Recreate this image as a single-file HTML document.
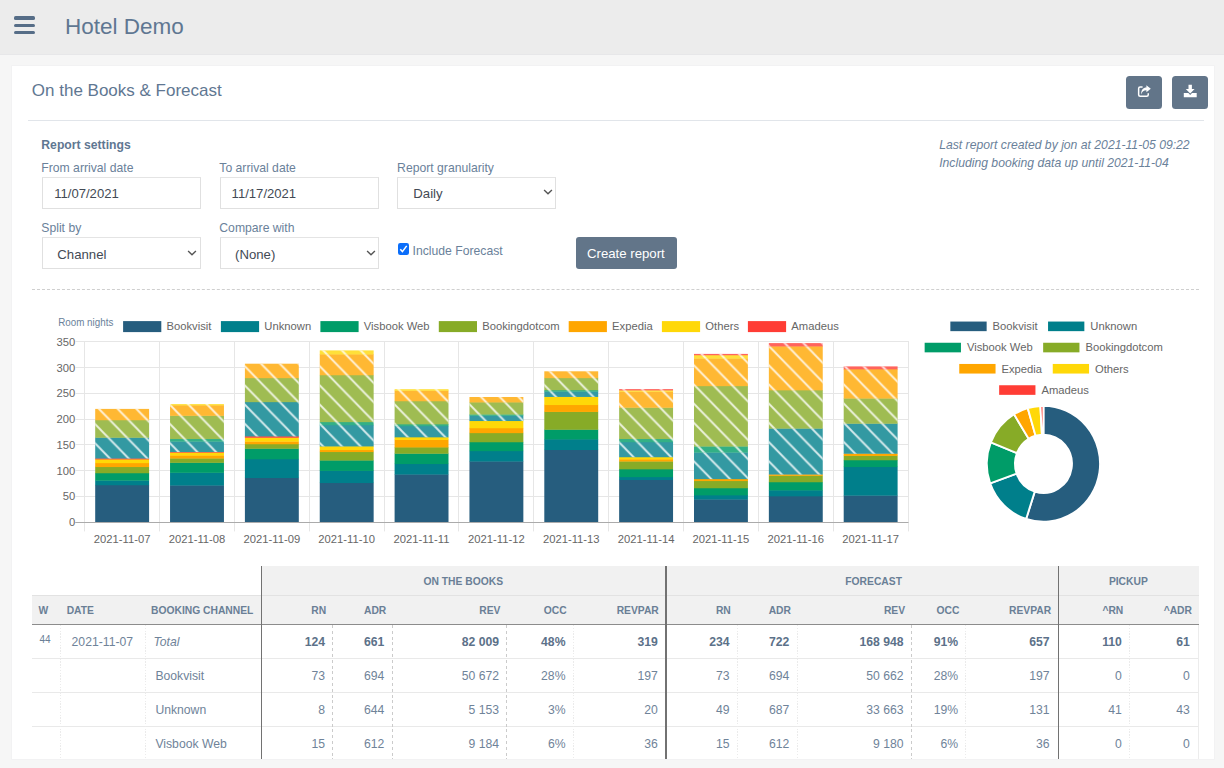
<!DOCTYPE html>
<html><head><meta charset="utf-8"><title>Hotel Demo</title>
<style>
html,body{margin:0;padding:0;}
body{width:1224px;height:768px;overflow:hidden;background:#f6f6f6;font-family:"Liberation Sans", sans-serif;position:relative;}
.t{position:absolute;white-space:nowrap;line-height:1;}
</style></head><body>
<div style="position:absolute;left:0.00px;top:0.00px;width:1224.00px;height:55.00px;background:#ececec"></div><div style="position:absolute;left:0.00px;top:54.00px;width:1224.00px;height:1.00px;background:#e7e7e9"></div><div style="position:absolute;left:14.00px;top:16.40px;width:21.00px;height:3.50px;background:#566d87;border-radius:1.6px"></div><div style="position:absolute;left:14.00px;top:23.50px;width:21.00px;height:3.50px;background:#566d87;border-radius:1.6px"></div><div style="position:absolute;left:14.00px;top:30.90px;width:21.00px;height:3.50px;background:#566d87;border-radius:1.6px"></div><div class="t" style="left:65.00px;top:16.15px;font-size:22.5px;color:#5f7792;font-weight:normal;font-style:normal;">Hotel Demo</div><div style="position:absolute;left:11.80px;top:65.80px;width:1202.60px;height:693.00px;background:#fff;box-shadow:0 0 0 0.6px #efeff1"></div><div class="t" style="left:31.80px;top:81.81px;font-size:17px;color:#5f7792;font-weight:normal;font-style:normal;">On the Books &amp; Forecast</div><div style="position:absolute;left:1126.00px;top:76.00px;width:36.00px;height:32.50px;background:#627589;border-radius:3.5px"></div><div style="position:absolute;left:1172.00px;top:76.00px;width:36.00px;height:32.50px;background:#627589;border-radius:3.5px"></div><svg style="position:absolute;left:1126px;top:76px" width="36" height="33" viewBox="0 0 36 33">
<path d="M16.6 11.05 H14.2 a1.55 1.55 0 0 0 -1.55 1.55 V18.7 a1.55 1.55 0 0 0 1.55 1.55 H20.7 a1.55 1.55 0 0 0 1.55 -1.55 V17.2" fill="none" stroke="#fff" stroke-width="1.5"/>
<path d="M15.1 18.6 C15.1 14.2 17.2 11.6 20.4 11.6 V9.2 L24.8 12.8 L20.4 16.3 V14.3 C17.6 14.3 16.3 15.4 15.1 18.6 Z" fill="#fff"/>
</svg><svg style="position:absolute;left:1172px;top:76px" width="36" height="33" viewBox="0 0 36 33">
<path d="M16.5 8.7 H19.9 V13 H22.6 L18.2 17.4 L13.8 13 H16.5 Z" fill="#fff"/>
<path d="M11.8 17.1 H16.4 L18.2 18.9 L20 17.1 H24.7 V21.2 H11.8 Z" fill="#fff"/>
</svg><div style="position:absolute;left:28.00px;top:120.00px;width:1175.60px;height:1.20px;background:#e1e5ea"></div><div class="t" style="left:41.30px;top:139.17px;font-size:12.2px;color:#5f7792;font-weight:bold;font-style:normal;">Report settings</div><div class="t" style="left:41.30px;top:161.87px;font-size:12.2px;color:#6a819a;font-weight:normal;font-style:normal;">From arrival date</div><div class="t" style="left:219.30px;top:161.87px;font-size:12.2px;color:#6a819a;font-weight:normal;font-style:normal;">To arrival date</div><div class="t" style="left:397.10px;top:161.87px;font-size:12.2px;color:#6a819a;font-weight:normal;font-style:normal;">Report granularity</div><div class="t" style="left:41.30px;top:222.27px;font-size:12.2px;color:#6a819a;font-weight:normal;font-style:normal;">Split by</div><div class="t" style="left:219.30px;top:222.27px;font-size:12.2px;color:#6a819a;font-weight:normal;font-style:normal;">Compare with</div><div style="position:absolute;left:42.00px;top:177.00px;width:159.00px;height:32.00px;background:#fff;border:1px solid #e0e0e0;border-top-color:#e4e4e4;box-sizing:border-box"></div><div style="position:absolute;left:219.50px;top:177.00px;width:159.30px;height:32.00px;background:#fff;border:1px solid #e0e0e0;border-top-color:#e4e4e4;box-sizing:border-box"></div><div style="position:absolute;left:397.40px;top:177.00px;width:158.40px;height:32.00px;background:#fff;border:1px solid #e0e0e0;border-top-color:#e4e4e4;box-sizing:border-box"></div><div style="position:absolute;left:42.00px;top:237.00px;width:159.00px;height:32.00px;background:#fff;border:1px solid #e0e0e0;border-top-color:#e4e4e4;box-sizing:border-box"></div><div style="position:absolute;left:219.50px;top:237.00px;width:159.30px;height:32.00px;background:#fff;border:1px solid #e0e0e0;border-top-color:#e4e4e4;box-sizing:border-box"></div><div class="t" style="left:54.20px;top:187.21px;font-size:13.1px;color:#434a54;font-weight:normal;font-style:normal;">11/07/2021</div><div class="t" style="left:231.60px;top:187.21px;font-size:13.1px;color:#434a54;font-weight:normal;font-style:normal;">11/17/2021</div><div class="t" style="left:413.30px;top:187.13px;font-size:13.2px;color:#434a54;font-weight:normal;font-style:normal;">Daily</div><div class="t" style="left:57.30px;top:247.53px;font-size:13.2px;color:#434a54;font-weight:normal;font-style:normal;">Channel</div><div class="t" style="left:235.00px;top:247.53px;font-size:13.2px;color:#434a54;font-weight:normal;font-style:normal;">(None)</div><svg style="position:absolute;left:542.9px;top:188.4px" width="10" height="8" viewBox="0 0 10 8"><path d="M1.1 1.9 L5 5.7 L8.9 1.9" fill="none" stroke="#555" stroke-width="1.4"/></svg><svg style="position:absolute;left:187.1px;top:248.7px" width="10" height="8" viewBox="0 0 10 8"><path d="M1.1 1.9 L5 5.7 L8.9 1.9" fill="none" stroke="#555" stroke-width="1.4"/></svg><svg style="position:absolute;left:365.6px;top:248.7px" width="10" height="8" viewBox="0 0 10 8"><path d="M1.1 1.9 L5 5.7 L8.9 1.9" fill="none" stroke="#555" stroke-width="1.4"/></svg><div style="position:absolute;left:397.80px;top:242.80px;width:11.10px;height:11.90px;background:#0b6efa;border-radius:2.2px"></div><svg style="position:absolute;left:397.8px;top:242.8px" width="12" height="12" viewBox="0 0 12 12"><path d="M2.3 6.3 L4.4 8.6 L8.7 2.9" fill="none" stroke="#fff" stroke-width="1.5"/></svg><div class="t" style="left:412.60px;top:245.17px;font-size:12.2px;color:#6a819a;font-weight:normal;font-style:normal;">Include Forecast</div><div style="position:absolute;left:575.80px;top:237.20px;width:101.00px;height:31.80px;background:#627589;border-radius:3px"></div><div class="t" style="left:587.00px;top:247.43px;font-size:13.2px;color:#fff;font-weight:normal;font-style:normal;">Create report</div><div class="t" style="left:939.20px;top:138.67px;font-size:12.2px;color:#6a819a;font-weight:normal;font-style:italic;">Last report created by jon at 2021-11-05 09:22</div><div class="t" style="left:939.20px;top:156.67px;font-size:12.2px;color:#6a819a;font-weight:normal;font-style:italic;">Including booking data up until 2021-11-04</div><div style="position:absolute;left:32.00px;top:289.00px;width:1167.20px;height:0.00px;border-top:1px dashed #cfcfcf"></div><svg style="position:absolute;left:0;top:0" width="1224" height="768" viewBox="0 0 1224 768">
<defs><pattern id="hatch" patternUnits="userSpaceOnUse" width="20" height="20" x="0" y="0" patternTransform="translate(100.82,430) scale(0.9375,0.96)"><path d="M-3,-3 L23,23 M-3,17 L3,23 M17,-3 L23,3" stroke="rgba(255,255,255,0.8)" stroke-width="2" fill="none"/></pattern></defs>
<rect x="75.5" y="496" width="833.0" height="1" fill="#e6e6e6"/>
<rect x="75.5" y="470" width="833.0" height="1" fill="#e6e6e6"/>
<rect x="75.5" y="444" width="833.0" height="1" fill="#e6e6e6"/>
<rect x="75.5" y="419" width="833.0" height="1" fill="#e6e6e6"/>
<rect x="75.5" y="393" width="833.0" height="1" fill="#e6e6e6"/>
<rect x="75.5" y="367" width="833.0" height="1" fill="#e6e6e6"/>
<rect x="75.5" y="341" width="833.0" height="1" fill="#e6e6e6"/>
<rect x="84" y="341" width="1" height="190.40" fill="#e6e6e6"/>
<rect x="159" y="341" width="1" height="190.40" fill="#e6e6e6"/>
<rect x="234" y="341" width="1" height="190.40" fill="#e6e6e6"/>
<rect x="309" y="341" width="1" height="190.40" fill="#e6e6e6"/>
<rect x="384" y="341" width="1" height="190.40" fill="#e6e6e6"/>
<rect x="458" y="341" width="1" height="190.40" fill="#e6e6e6"/>
<rect x="533" y="341" width="1" height="190.40" fill="#e6e6e6"/>
<rect x="608" y="341" width="1" height="190.40" fill="#e6e6e6"/>
<rect x="683" y="341" width="1" height="190.40" fill="#e6e6e6"/>
<rect x="758" y="341" width="1" height="190.40" fill="#e6e6e6"/>
<rect x="833" y="341" width="1" height="190.40" fill="#e6e6e6"/>
<rect x="908" y="341" width="1" height="190.40" fill="#e6e6e6"/>
<text font-family="Liberation Sans" transform="translate(75.30,526.10) scale(0.976,1)" font-size="11.52" fill="#666" text-anchor="end">0</text>
<text font-family="Liberation Sans" transform="translate(75.30,500.36) scale(0.976,1)" font-size="11.52" fill="#666" text-anchor="end">50</text>
<text font-family="Liberation Sans" transform="translate(75.30,474.61) scale(0.976,1)" font-size="11.52" fill="#666" text-anchor="end">100</text>
<text font-family="Liberation Sans" transform="translate(75.30,448.87) scale(0.976,1)" font-size="11.52" fill="#666" text-anchor="end">150</text>
<text font-family="Liberation Sans" transform="translate(75.30,423.13) scale(0.976,1)" font-size="11.52" fill="#666" text-anchor="end">200</text>
<text font-family="Liberation Sans" transform="translate(75.30,397.39) scale(0.976,1)" font-size="11.52" fill="#666" text-anchor="end">250</text>
<text font-family="Liberation Sans" transform="translate(75.30,371.64) scale(0.976,1)" font-size="11.52" fill="#666" text-anchor="end">300</text>
<text font-family="Liberation Sans" transform="translate(75.30,345.90) scale(0.976,1)" font-size="11.52" fill="#666" text-anchor="end">350</text>
<rect x="95.20" y="484.90" width="53.9" height="37.10" fill="#265d7e"/>
<rect x="95.20" y="480.30" width="53.9" height="4.95" fill="#007f8b"/>
<rect x="95.20" y="472.90" width="53.9" height="7.75" fill="#009c68"/>
<rect x="95.20" y="466.70" width="53.9" height="6.55" fill="#87ab27"/>
<rect x="95.20" y="462.80" width="53.9" height="4.25" fill="#ffa600"/>
<rect x="95.20" y="459.10" width="53.9" height="4.05" fill="#ffd808"/>
<rect x="95.20" y="458.20" width="53.9" height="1.25" fill="#ff3d35"/>
<rect x="95.20" y="437.40" width="53.9" height="21.15" fill="#3399a2"/>
<rect x="95.20" y="437.40" width="53.9" height="21.15" fill="url(#hatch)"/>
<rect x="95.20" y="419.90" width="53.9" height="17.85" fill="#9fbc52"/>
<rect x="95.20" y="419.90" width="53.9" height="17.85" fill="url(#hatch)"/>
<rect x="95.20" y="408.90" width="53.9" height="11.35" fill="#ffb833"/>
<rect x="95.20" y="408.90" width="53.9" height="11.35" fill="url(#hatch)"/>
<rect x="170.05" y="485.20" width="53.9" height="36.80" fill="#265d7e"/>
<rect x="170.05" y="472.50" width="53.9" height="13.05" fill="#007f8b"/>
<rect x="170.05" y="462.50" width="53.9" height="10.35" fill="#009c68"/>
<rect x="170.05" y="458.20" width="53.9" height="4.65" fill="#87ab27"/>
<rect x="170.05" y="455.20" width="53.9" height="3.35" fill="#ffa600"/>
<rect x="170.05" y="452.30" width="53.9" height="3.25" fill="#ffd808"/>
<rect x="170.05" y="451.70" width="53.9" height="0.95" fill="#ff3d35"/>
<rect x="170.05" y="441.30" width="53.9" height="10.75" fill="#3399a2"/>
<rect x="170.05" y="441.30" width="53.9" height="10.75" fill="url(#hatch)"/>
<rect x="170.05" y="438.70" width="53.9" height="2.95" fill="#33b086"/>
<rect x="170.05" y="438.70" width="53.9" height="2.95" fill="url(#hatch)"/>
<rect x="170.05" y="415.50" width="53.9" height="23.55" fill="#9fbc52"/>
<rect x="170.05" y="415.50" width="53.9" height="23.55" fill="url(#hatch)"/>
<rect x="170.05" y="405.10" width="53.9" height="10.75" fill="#ffb833"/>
<rect x="170.05" y="405.10" width="53.9" height="10.75" fill="url(#hatch)"/>
<rect x="170.05" y="404.10" width="53.9" height="1.35" fill="#ffe039"/>
<rect x="170.05" y="404.10" width="53.9" height="1.35" fill="url(#hatch)"/>
<rect x="244.90" y="477.70" width="53.9" height="44.30" fill="#265d7e"/>
<rect x="244.90" y="458.90" width="53.9" height="19.15" fill="#007f8b"/>
<rect x="244.90" y="448.40" width="53.9" height="10.85" fill="#009c68"/>
<rect x="244.90" y="443.90" width="53.9" height="4.85" fill="#87ab27"/>
<rect x="244.90" y="441.30" width="53.9" height="2.95" fill="#ffa600"/>
<rect x="244.90" y="437.40" width="53.9" height="4.25" fill="#ffd808"/>
<rect x="244.90" y="436.10" width="53.9" height="1.65" fill="#ff3d35"/>
<rect x="244.90" y="401.80" width="53.9" height="34.65" fill="#3399a2"/>
<rect x="244.90" y="401.80" width="53.9" height="34.65" fill="url(#hatch)"/>
<rect x="244.90" y="377.80" width="53.9" height="24.35" fill="#9fbc52"/>
<rect x="244.90" y="377.80" width="53.9" height="24.35" fill="url(#hatch)"/>
<rect x="244.90" y="363.70" width="53.9" height="14.45" fill="#ffb833"/>
<rect x="244.90" y="363.70" width="53.9" height="14.45" fill="url(#hatch)"/>
<rect x="319.75" y="482.70" width="53.9" height="39.30" fill="#265d7e"/>
<rect x="319.75" y="470.60" width="53.9" height="12.45" fill="#007f8b"/>
<rect x="319.75" y="460.20" width="53.9" height="10.75" fill="#009c68"/>
<rect x="319.75" y="451.70" width="53.9" height="8.85" fill="#87ab27"/>
<rect x="319.75" y="449.70" width="53.9" height="2.35" fill="#ffa600"/>
<rect x="319.75" y="446.10" width="53.9" height="3.95" fill="#ffd808"/>
<rect x="319.75" y="424.90" width="53.9" height="21.55" fill="#3399a2"/>
<rect x="319.75" y="424.90" width="53.9" height="21.55" fill="url(#hatch)"/>
<rect x="319.75" y="421.80" width="53.9" height="3.45" fill="#33b086"/>
<rect x="319.75" y="421.80" width="53.9" height="3.45" fill="url(#hatch)"/>
<rect x="319.75" y="374.90" width="53.9" height="47.25" fill="#9fbc52"/>
<rect x="319.75" y="374.90" width="53.9" height="47.25" fill="url(#hatch)"/>
<rect x="319.75" y="354.10" width="53.9" height="21.15" fill="#ffb833"/>
<rect x="319.75" y="354.10" width="53.9" height="21.15" fill="url(#hatch)"/>
<rect x="319.75" y="350.40" width="53.9" height="4.05" fill="#ffe039"/>
<rect x="319.75" y="350.40" width="53.9" height="4.05" fill="url(#hatch)"/>
<rect x="394.60" y="474.20" width="53.9" height="47.80" fill="#265d7e"/>
<rect x="394.60" y="463.70" width="53.9" height="10.85" fill="#007f8b"/>
<rect x="394.60" y="453.40" width="53.9" height="10.65" fill="#009c68"/>
<rect x="394.60" y="447.10" width="53.9" height="6.65" fill="#87ab27"/>
<rect x="394.60" y="439.60" width="53.9" height="7.85" fill="#ffa600"/>
<rect x="394.60" y="437.00" width="53.9" height="2.95" fill="#ffd808"/>
<rect x="394.60" y="425.90" width="53.9" height="11.45" fill="#3399a2"/>
<rect x="394.60" y="425.90" width="53.9" height="11.45" fill="url(#hatch)"/>
<rect x="394.60" y="424.00" width="53.9" height="2.25" fill="#33b086"/>
<rect x="394.60" y="424.00" width="53.9" height="2.25" fill="url(#hatch)"/>
<rect x="394.60" y="400.90" width="53.9" height="23.45" fill="#9fbc52"/>
<rect x="394.60" y="400.90" width="53.9" height="23.45" fill="url(#hatch)"/>
<rect x="394.60" y="390.50" width="53.9" height="10.75" fill="#ffb833"/>
<rect x="394.60" y="390.50" width="53.9" height="10.75" fill="url(#hatch)"/>
<rect x="394.60" y="389.20" width="53.9" height="1.65" fill="#ffe039"/>
<rect x="394.60" y="389.20" width="53.9" height="1.65" fill="url(#hatch)"/>
<rect x="469.45" y="461.20" width="53.9" height="60.80" fill="#265d7e"/>
<rect x="469.45" y="450.80" width="53.9" height="10.75" fill="#007f8b"/>
<rect x="469.45" y="441.90" width="53.9" height="9.25" fill="#009c68"/>
<rect x="469.45" y="432.80" width="53.9" height="9.45" fill="#87ab27"/>
<rect x="469.45" y="427.90" width="53.9" height="5.25" fill="#ffa600"/>
<rect x="469.45" y="420.70" width="53.9" height="7.55" fill="#ffd808"/>
<rect x="469.45" y="415.50" width="53.9" height="5.55" fill="#3399a2"/>
<rect x="469.45" y="415.50" width="53.9" height="5.55" fill="url(#hatch)"/>
<rect x="469.45" y="414.20" width="53.9" height="1.65" fill="#33b086"/>
<rect x="469.45" y="414.20" width="53.9" height="1.65" fill="url(#hatch)"/>
<rect x="469.45" y="402.10" width="53.9" height="12.45" fill="#9fbc52"/>
<rect x="469.45" y="402.10" width="53.9" height="12.45" fill="url(#hatch)"/>
<rect x="469.45" y="397.00" width="53.9" height="5.45" fill="#ffb833"/>
<rect x="469.45" y="397.00" width="53.9" height="5.45" fill="url(#hatch)"/>
<rect x="544.30" y="449.70" width="53.9" height="72.30" fill="#265d7e"/>
<rect x="544.30" y="439.10" width="53.9" height="10.95" fill="#007f8b"/>
<rect x="544.30" y="429.40" width="53.9" height="10.05" fill="#009c68"/>
<rect x="544.30" y="411.60" width="53.9" height="18.15" fill="#87ab27"/>
<rect x="544.30" y="404.70" width="53.9" height="7.25" fill="#ffa600"/>
<rect x="544.30" y="396.60" width="53.9" height="8.45" fill="#ffd808"/>
<rect x="544.30" y="391.40" width="53.9" height="5.55" fill="#3399a2"/>
<rect x="544.30" y="391.40" width="53.9" height="5.55" fill="url(#hatch)"/>
<rect x="544.30" y="389.90" width="53.9" height="1.85" fill="#33b086"/>
<rect x="544.30" y="389.90" width="53.9" height="1.85" fill="url(#hatch)"/>
<rect x="544.30" y="377.80" width="53.9" height="12.45" fill="#9fbc52"/>
<rect x="544.30" y="377.80" width="53.9" height="12.45" fill="url(#hatch)"/>
<rect x="544.30" y="371.30" width="53.9" height="6.85" fill="#ffb833"/>
<rect x="544.30" y="371.30" width="53.9" height="6.85" fill="url(#hatch)"/>
<rect x="619.15" y="479.70" width="53.9" height="42.30" fill="#265d7e"/>
<rect x="619.15" y="476.80" width="53.9" height="3.25" fill="#007f8b"/>
<rect x="619.15" y="469.00" width="53.9" height="8.15" fill="#009c68"/>
<rect x="619.15" y="461.20" width="53.9" height="8.15" fill="#87ab27"/>
<rect x="619.15" y="459.10" width="53.9" height="2.45" fill="#ffa600"/>
<rect x="619.15" y="456.90" width="53.9" height="2.55" fill="#ffd808"/>
<rect x="619.15" y="441.90" width="53.9" height="15.35" fill="#3399a2"/>
<rect x="619.15" y="441.90" width="53.9" height="15.35" fill="url(#hatch)"/>
<rect x="619.15" y="438.70" width="53.9" height="3.55" fill="#33b086"/>
<rect x="619.15" y="438.70" width="53.9" height="3.55" fill="url(#hatch)"/>
<rect x="619.15" y="407.40" width="53.9" height="31.65" fill="#9fbc52"/>
<rect x="619.15" y="407.40" width="53.9" height="31.65" fill="url(#hatch)"/>
<rect x="619.15" y="391.40" width="53.9" height="16.35" fill="#ffb833"/>
<rect x="619.15" y="391.40" width="53.9" height="16.35" fill="url(#hatch)"/>
<rect x="619.15" y="390.10" width="53.9" height="1.65" fill="#ffe039"/>
<rect x="619.15" y="390.10" width="53.9" height="1.65" fill="url(#hatch)"/>
<rect x="619.15" y="389.10" width="53.9" height="1.35" fill="#ff645d"/>
<rect x="619.15" y="389.10" width="53.9" height="1.35" fill="url(#hatch)"/>
<rect x="694.00" y="499.20" width="53.9" height="22.80" fill="#265d7e"/>
<rect x="694.00" y="495.00" width="53.9" height="4.55" fill="#007f8b"/>
<rect x="694.00" y="487.90" width="53.9" height="7.45" fill="#009c68"/>
<rect x="694.00" y="480.70" width="53.9" height="7.55" fill="#87ab27"/>
<rect x="694.00" y="478.80" width="53.9" height="2.25" fill="#ffa600"/>
<rect x="694.00" y="452.30" width="53.9" height="26.85" fill="#3399a2"/>
<rect x="694.00" y="452.30" width="53.9" height="26.85" fill="url(#hatch)"/>
<rect x="694.00" y="446.20" width="53.9" height="6.45" fill="#33b086"/>
<rect x="694.00" y="446.20" width="53.9" height="6.45" fill="url(#hatch)"/>
<rect x="694.00" y="385.80" width="53.9" height="60.75" fill="#9fbc52"/>
<rect x="694.00" y="385.80" width="53.9" height="60.75" fill="url(#hatch)"/>
<rect x="694.00" y="358.20" width="53.9" height="27.95" fill="#ffb833"/>
<rect x="694.00" y="358.20" width="53.9" height="27.95" fill="url(#hatch)"/>
<rect x="694.00" y="354.90" width="53.9" height="3.65" fill="#ffe039"/>
<rect x="694.00" y="354.90" width="53.9" height="3.65" fill="url(#hatch)"/>
<rect x="694.00" y="353.90" width="53.9" height="1.35" fill="#ff645d"/>
<rect x="694.00" y="353.90" width="53.9" height="1.35" fill="url(#hatch)"/>
<rect x="768.85" y="496.00" width="53.9" height="26.00" fill="#265d7e"/>
<rect x="768.85" y="490.10" width="53.9" height="6.25" fill="#007f8b"/>
<rect x="768.85" y="481.90" width="53.9" height="8.55" fill="#009c68"/>
<rect x="768.85" y="475.50" width="53.9" height="6.75" fill="#87ab27"/>
<rect x="768.85" y="474.20" width="53.9" height="1.65" fill="#ffa600"/>
<rect x="768.85" y="428.30" width="53.9" height="46.25" fill="#3399a2"/>
<rect x="768.85" y="428.30" width="53.9" height="46.25" fill="url(#hatch)"/>
<rect x="768.85" y="390.00" width="53.9" height="38.65" fill="#9fbc52"/>
<rect x="768.85" y="390.00" width="53.9" height="38.65" fill="url(#hatch)"/>
<rect x="768.85" y="346.10" width="53.9" height="44.25" fill="#ffb833"/>
<rect x="768.85" y="346.10" width="53.9" height="44.25" fill="url(#hatch)"/>
<rect x="768.85" y="343.10" width="53.9" height="3.35" fill="#ff645d"/>
<rect x="768.85" y="343.10" width="53.9" height="3.35" fill="url(#hatch)"/>
<rect x="843.70" y="495.30" width="53.9" height="26.70" fill="#265d7e"/>
<rect x="843.70" y="466.70" width="53.9" height="28.95" fill="#007f8b"/>
<rect x="843.70" y="459.90" width="53.9" height="7.15" fill="#009c68"/>
<rect x="843.70" y="455.60" width="53.9" height="4.65" fill="#87ab27"/>
<rect x="843.70" y="453.40" width="53.9" height="2.55" fill="#ffa600"/>
<rect x="843.70" y="423.40" width="53.9" height="30.35" fill="#3399a2"/>
<rect x="843.70" y="423.40" width="53.9" height="30.35" fill="url(#hatch)"/>
<rect x="843.70" y="398.20" width="53.9" height="25.55" fill="#9fbc52"/>
<rect x="843.70" y="398.20" width="53.9" height="25.55" fill="url(#hatch)"/>
<rect x="843.70" y="369.00" width="53.9" height="29.55" fill="#ffb833"/>
<rect x="843.70" y="369.00" width="53.9" height="29.55" fill="url(#hatch)"/>
<rect x="843.70" y="366.40" width="53.9" height="2.95" fill="#ff645d"/>
<rect x="843.70" y="366.40" width="53.9" height="2.95" fill="url(#hatch)"/>
<rect x="75.2" y="522.0" width="833.3" height="1" fill="#ababab"/>
<text font-family="Liberation Sans" transform="translate(122.12,542.70) scale(0.976,1)" font-size="11.52" fill="#666" text-anchor="middle">2021-11-07</text>
<text font-family="Liberation Sans" transform="translate(196.97,542.70) scale(0.976,1)" font-size="11.52" fill="#666" text-anchor="middle">2021-11-08</text>
<text font-family="Liberation Sans" transform="translate(271.82,542.70) scale(0.976,1)" font-size="11.52" fill="#666" text-anchor="middle">2021-11-09</text>
<text font-family="Liberation Sans" transform="translate(346.67,542.70) scale(0.976,1)" font-size="11.52" fill="#666" text-anchor="middle">2021-11-10</text>
<text font-family="Liberation Sans" transform="translate(421.52,542.70) scale(0.976,1)" font-size="11.52" fill="#666" text-anchor="middle">2021-11-11</text>
<text font-family="Liberation Sans" transform="translate(496.37,542.70) scale(0.976,1)" font-size="11.52" fill="#666" text-anchor="middle">2021-11-12</text>
<text font-family="Liberation Sans" transform="translate(571.23,542.70) scale(0.976,1)" font-size="11.52" fill="#666" text-anchor="middle">2021-11-13</text>
<text font-family="Liberation Sans" transform="translate(646.08,542.70) scale(0.976,1)" font-size="11.52" fill="#666" text-anchor="middle">2021-11-14</text>
<text font-family="Liberation Sans" transform="translate(720.92,542.70) scale(0.976,1)" font-size="11.52" fill="#666" text-anchor="middle">2021-11-15</text>
<text font-family="Liberation Sans" transform="translate(795.77,542.70) scale(0.976,1)" font-size="11.52" fill="#666" text-anchor="middle">2021-11-16</text>
<text font-family="Liberation Sans" transform="translate(870.62,542.70) scale(0.976,1)" font-size="11.52" fill="#666" text-anchor="middle">2021-11-17</text>
<text font-family="Liberation Sans" transform="translate(58.20,326.00) scale(0.976,1)" font-size="10.08" fill="#6a819a">Room nights</text>
<rect x="123.1" y="321.1" width="38.2" height="11" fill="#265d7e"/>
<text font-family="Liberation Sans" transform="translate(166.50,330.20) scale(0.976,1)" font-size="11.52" fill="#666">Bookvisit</text>
<rect x="220.9" y="321.1" width="38.2" height="11" fill="#007f8b"/>
<text font-family="Liberation Sans" transform="translate(264.30,330.20) scale(0.976,1)" font-size="11.52" fill="#666">Unknown</text>
<rect x="320.4" y="321.1" width="38.2" height="11" fill="#009c68"/>
<text font-family="Liberation Sans" transform="translate(363.80,330.20) scale(0.976,1)" font-size="11.52" fill="#666">Visbook Web</text>
<rect x="438.8" y="321.1" width="38.2" height="11" fill="#87ab27"/>
<text font-family="Liberation Sans" transform="translate(482.20,330.20) scale(0.976,1)" font-size="11.52" fill="#666">Bookingdotcom</text>
<rect x="568.7" y="321.1" width="38.2" height="11" fill="#ffa600"/>
<text font-family="Liberation Sans" transform="translate(612.10,330.20) scale(0.976,1)" font-size="11.52" fill="#666">Expedia</text>
<rect x="661.9" y="321.1" width="38.2" height="11" fill="#ffd808"/>
<text font-family="Liberation Sans" transform="translate(705.30,330.20) scale(0.976,1)" font-size="11.52" fill="#666">Others</text>
<rect x="747.9" y="321.1" width="38.2" height="11" fill="#ff3d35"/>
<text font-family="Liberation Sans" transform="translate(791.30,330.20) scale(0.976,1)" font-size="11.52" fill="#666">Amadeus</text>
<g transform="translate(1043.45,463.8) scale(1,1.024) translate(-1043.45,-463.8)">
<path d="M1043.45,407.20 A56.6,56.6 0 1 1 1026.15,517.69 L1034.74,490.94 A28.5,28.5 0 1 0 1043.45,435.30 Z" fill="#265d7e" stroke="#fff" stroke-width="1.9" stroke-linejoin="bevel"/>
<path d="M1026.15,517.69 A56.6,56.6 0 0 1 990.16,482.88 L1016.62,473.41 A28.5,28.5 0 0 0 1034.74,490.94 Z" fill="#007f8b" stroke="#fff" stroke-width="1.9" stroke-linejoin="bevel"/>
<path d="M990.16,482.88 A56.6,56.6 0 0 1 990.82,442.96 L1016.95,453.31 A28.5,28.5 0 0 0 1016.62,473.41 Z" fill="#009c68" stroke="#fff" stroke-width="1.9" stroke-linejoin="bevel"/>
<path d="M990.82,442.96 A56.6,56.6 0 0 1 1014.05,415.44 L1028.64,439.45 A28.5,28.5 0 0 0 1016.95,453.31 Z" fill="#87ab27" stroke="#fff" stroke-width="1.9" stroke-linejoin="bevel"/>
<path d="M1014.05,415.44 A56.6,56.6 0 0 1 1027.75,409.42 L1035.55,436.42 A28.5,28.5 0 0 0 1028.64,439.45 Z" fill="#ffa600" stroke="#fff" stroke-width="1.9" stroke-linejoin="bevel"/>
<path d="M1027.75,409.42 A56.6,56.6 0 0 1 1040.39,407.28 L1041.91,435.34 A28.5,28.5 0 0 0 1035.55,436.42 Z" fill="#ffd808" stroke="#fff" stroke-width="1.9" stroke-linejoin="bevel"/>
<path d="M1040.39,407.28 A56.6,56.6 0 0 1 1043.45,407.20 L1043.45,435.30 A28.5,28.5 0 0 0 1041.91,435.34 Z" fill="#ff3d35" stroke="#fff" stroke-width="1.9" stroke-linejoin="bevel"/>
</g>
<rect x="949.40" y="320.60" width="38.2" height="11.5" fill="#265d7e" stroke="#fff" stroke-width="1.9"/>
<text font-family="Liberation Sans" transform="translate(992.60,330.20) scale(0.976,1)" font-size="11.52" fill="#666">Bookvisit</text>
<rect x="1047.10" y="320.60" width="38.2" height="11.5" fill="#007f8b" stroke="#fff" stroke-width="1.9"/>
<text font-family="Liberation Sans" transform="translate(1090.30,330.20) scale(0.976,1)" font-size="11.52" fill="#666">Unknown</text>
<rect x="923.70" y="341.80" width="38.2" height="11.5" fill="#009c68" stroke="#fff" stroke-width="1.9"/>
<text font-family="Liberation Sans" transform="translate(966.90,351.40) scale(0.976,1)" font-size="11.52" fill="#666">Visbook Web</text>
<rect x="1042.20" y="341.80" width="38.2" height="11.5" fill="#87ab27" stroke="#fff" stroke-width="1.9"/>
<text font-family="Liberation Sans" transform="translate(1085.40,351.40) scale(0.976,1)" font-size="11.52" fill="#666">Bookingdotcom</text>
<rect x="958.30" y="363.00" width="38.2" height="11.5" fill="#ffa600" stroke="#fff" stroke-width="1.9"/>
<text font-family="Liberation Sans" transform="translate(1001.50,372.60) scale(0.976,1)" font-size="11.52" fill="#666">Expedia</text>
<rect x="1051.80" y="363.00" width="38.2" height="11.5" fill="#ffd808" stroke="#fff" stroke-width="1.9"/>
<text font-family="Liberation Sans" transform="translate(1095.00,372.60) scale(0.976,1)" font-size="11.52" fill="#666">Others</text>
<rect x="998.20" y="384.30" width="38.2" height="11.5" fill="#ff3d35" stroke="#fff" stroke-width="1.9"/>
<text font-family="Liberation Sans" transform="translate(1041.40,393.90) scale(0.976,1)" font-size="11.52" fill="#666">Amadeus</text>
</svg><div style="position:absolute;left:261.50px;top:566.00px;width:937.10px;height:29.50px;background:#f1f1f1"></div><div style="position:absolute;left:32.10px;top:595.00px;width:1166.50px;height:29.50px;background:#f1f1f1"></div><div style="position:absolute;left:32.10px;top:595.00px;width:1166.50px;height:1.20px;background:#e2e2e2"></div><div style="position:absolute;left:261.50px;top:595.00px;width:937.10px;height:1.20px;background:#e2e2e2"></div><div style="position:absolute;left:32.10px;top:623.90px;width:1166.50px;height:1.20px;background:#8c8c8c"></div><div style="position:absolute;left:32.10px;top:657.60px;width:1166.50px;height:1.50px;background:#e9e9e9"></div><div style="position:absolute;left:32.10px;top:691.70px;width:1166.50px;height:1.50px;background:#e9e9e9"></div><div style="position:absolute;left:32.10px;top:725.60px;width:1166.50px;height:1.50px;background:#e9e9e9"></div><div style="position:absolute;left:59.60px;top:625.00px;width:1.00px;height:133.90px;background:repeating-linear-gradient(to bottom,#ebebeb 0,#ebebeb 1.4px,transparent 1.4px,transparent 2.8px)"></div><div style="position:absolute;left:144.60px;top:625.00px;width:1.00px;height:133.90px;background:repeating-linear-gradient(to bottom,#ebebeb 0,#ebebeb 1.4px,transparent 1.4px,transparent 2.8px)"></div><div style="position:absolute;left:572.80px;top:625.00px;width:1.00px;height:133.90px;background:repeating-linear-gradient(to bottom,#ebebeb 0,#ebebeb 1.4px,transparent 1.4px,transparent 2.8px)"></div><div style="position:absolute;left:736.60px;top:625.00px;width:1.00px;height:133.90px;background:repeating-linear-gradient(to bottom,#ebebeb 0,#ebebeb 1.4px,transparent 1.4px,transparent 2.8px)"></div><div style="position:absolute;left:796.80px;top:625.00px;width:1.00px;height:133.90px;background:repeating-linear-gradient(to bottom,#ebebeb 0,#ebebeb 1.4px,transparent 1.4px,transparent 2.8px)"></div><div style="position:absolute;left:964.80px;top:625.00px;width:1.00px;height:133.90px;background:repeating-linear-gradient(to bottom,#ebebeb 0,#ebebeb 1.4px,transparent 1.4px,transparent 2.8px)"></div><div style="position:absolute;left:1129.20px;top:625.00px;width:1.00px;height:133.90px;background:repeating-linear-gradient(to bottom,#ebebeb 0,#ebebeb 1.4px,transparent 1.4px,transparent 2.8px)"></div><div style="position:absolute;left:331.80px;top:625.00px;width:1.00px;height:133.90px;background:repeating-linear-gradient(to bottom,#cbcbcb 0,#cbcbcb 2.9px,transparent 2.9px,transparent 5.8px)"></div><div style="position:absolute;left:391.80px;top:625.00px;width:1.00px;height:133.90px;background:repeating-linear-gradient(to bottom,#cbcbcb 0,#cbcbcb 2.9px,transparent 2.9px,transparent 5.8px)"></div><div style="position:absolute;left:506.20px;top:625.00px;width:1.00px;height:133.90px;background:repeating-linear-gradient(to bottom,#cbcbcb 0,#cbcbcb 2.9px,transparent 2.9px,transparent 5.8px)"></div><div style="position:absolute;left:910.90px;top:625.00px;width:1.00px;height:133.90px;background:repeating-linear-gradient(to bottom,#cbcbcb 0,#cbcbcb 2.9px,transparent 2.9px,transparent 5.8px)"></div><div style="position:absolute;left:1197.90px;top:625.00px;width:1.20px;height:133.90px;background:#ececec"></div><div style="position:absolute;left:260.70px;top:566.00px;width:1.60px;height:192.90px;background:#727272"></div><div style="position:absolute;left:665.20px;top:566.00px;width:1.60px;height:192.90px;background:#727272"></div><div style="position:absolute;left:1057.70px;top:566.00px;width:1.60px;height:192.90px;background:#727272"></div><div class="t" style="left:423.50px;top:577.08px;font-size:10.3px;color:#6a7f96;font-weight:bold;font-style:normal;">ON THE BOOKS</div><div class="t" style="left:845.30px;top:577.08px;font-size:10.3px;color:#6a7f96;font-weight:bold;font-style:normal;">FORECAST</div><div class="t" style="left:1108.90px;top:577.08px;font-size:10.3px;color:#6a7f96;font-weight:bold;font-style:normal;">PICKUP</div><div class="t" style="left:38.40px;top:605.78px;font-size:10.3px;color:#6a7f96;font-weight:bold;font-style:normal;">W</div><div class="t" style="left:66.70px;top:605.78px;font-size:10.3px;color:#6a7f96;font-weight:bold;font-style:normal;">DATE</div><div class="t" style="left:151.00px;top:605.78px;font-size:10.3px;color:#6a7f96;font-weight:bold;font-style:normal;">BOOKING CHANNEL</div><div class="t" style="left:-73.80px;width:400px;text-align:right;top:605.78px;font-size:10.3px;color:#6a7f96;font-weight:bold;font-style:normal;">RN</div><div class="t" style="left:-13.70px;width:400px;text-align:right;top:605.78px;font-size:10.3px;color:#6a7f96;font-weight:bold;font-style:normal;">ADR</div><div class="t" style="left:100.40px;width:400px;text-align:right;top:605.78px;font-size:10.3px;color:#6a7f96;font-weight:bold;font-style:normal;">REV</div><div class="t" style="left:166.70px;width:400px;text-align:right;top:605.78px;font-size:10.3px;color:#6a7f96;font-weight:bold;font-style:normal;">OCC</div><div class="t" style="left:258.80px;width:400px;text-align:right;top:605.78px;font-size:10.3px;color:#6a7f96;font-weight:bold;font-style:normal;">REVPAR</div><div class="t" style="left:330.80px;width:400px;text-align:right;top:605.78px;font-size:10.3px;color:#6a7f96;font-weight:bold;font-style:normal;">RN</div><div class="t" style="left:391.00px;width:400px;text-align:right;top:605.78px;font-size:10.3px;color:#6a7f96;font-weight:bold;font-style:normal;">ADR</div><div class="t" style="left:505.10px;width:400px;text-align:right;top:605.78px;font-size:10.3px;color:#6a7f96;font-weight:bold;font-style:normal;">REV</div><div class="t" style="left:559.40px;width:400px;text-align:right;top:605.78px;font-size:10.3px;color:#6a7f96;font-weight:bold;font-style:normal;">OCC</div><div class="t" style="left:651.20px;width:400px;text-align:right;top:605.78px;font-size:10.3px;color:#6a7f96;font-weight:bold;font-style:normal;">REVPAR</div><div class="t" style="left:723.30px;width:400px;text-align:right;top:605.78px;font-size:10.3px;color:#6a7f96;font-weight:bold;font-style:normal;">^RN</div><div class="t" style="left:792.00px;width:400px;text-align:right;top:605.78px;font-size:10.3px;color:#6a7f96;font-weight:bold;font-style:normal;">^ADR</div><div class="t" style="left:39.50px;top:635.03px;font-size:10px;color:#6a7f96;font-weight:normal;font-style:normal;">44</div><div class="t" style="left:71.60px;top:636.07px;font-size:12.2px;color:#6f8399;font-weight:normal;font-style:normal;">2021-11-07</div><div class="t" style="left:153.40px;top:636.07px;font-size:12.2px;color:#6f8399;font-weight:normal;font-style:italic;">Total</div><div class="t" style="left:-75.00px;width:400px;text-align:right;top:636.07px;font-size:12.2px;color:#5c7189;font-weight:bold;font-style:normal;">124</div><div class="t" style="left:-15.60px;width:400px;text-align:right;top:636.07px;font-size:12.2px;color:#5c7189;font-weight:bold;font-style:normal;">661</div><div class="t" style="left:99.00px;width:400px;text-align:right;top:636.07px;font-size:12.2px;color:#5c7189;font-weight:bold;font-style:normal;">82 009</div><div class="t" style="left:165.50px;width:400px;text-align:right;top:636.07px;font-size:12.2px;color:#5c7189;font-weight:bold;font-style:normal;">48%</div><div class="t" style="left:257.90px;width:400px;text-align:right;top:636.07px;font-size:12.2px;color:#5c7189;font-weight:bold;font-style:normal;">319</div><div class="t" style="left:329.60px;width:400px;text-align:right;top:636.07px;font-size:12.2px;color:#5c7189;font-weight:bold;font-style:normal;">234</div><div class="t" style="left:389.40px;width:400px;text-align:right;top:636.07px;font-size:12.2px;color:#5c7189;font-weight:bold;font-style:normal;">722</div><div class="t" style="left:503.50px;width:400px;text-align:right;top:636.07px;font-size:12.2px;color:#5c7189;font-weight:bold;font-style:normal;">168 948</div><div class="t" style="left:558.10px;width:400px;text-align:right;top:636.07px;font-size:12.2px;color:#5c7189;font-weight:bold;font-style:normal;">91%</div><div class="t" style="left:649.60px;width:400px;text-align:right;top:636.07px;font-size:12.2px;color:#5c7189;font-weight:bold;font-style:normal;">657</div><div class="t" style="left:721.80px;width:400px;text-align:right;top:636.07px;font-size:12.2px;color:#5c7189;font-weight:bold;font-style:normal;">110</div><div class="t" style="left:789.90px;width:400px;text-align:right;top:636.07px;font-size:12.2px;color:#5c7189;font-weight:bold;font-style:normal;">61</div><div class="t" style="left:155.40px;top:670.27px;font-size:12.2px;color:#6f8399;font-weight:normal;font-style:normal;">Bookvisit</div><div class="t" style="left:-75.00px;width:400px;text-align:right;top:670.27px;font-size:12.2px;color:#6f8399;font-weight:normal;font-style:normal;">73</div><div class="t" style="left:-15.60px;width:400px;text-align:right;top:670.27px;font-size:12.2px;color:#6f8399;font-weight:normal;font-style:normal;">694</div><div class="t" style="left:99.00px;width:400px;text-align:right;top:670.27px;font-size:12.2px;color:#6f8399;font-weight:normal;font-style:normal;">50 672</div><div class="t" style="left:165.50px;width:400px;text-align:right;top:670.27px;font-size:12.2px;color:#6f8399;font-weight:normal;font-style:normal;">28%</div><div class="t" style="left:257.90px;width:400px;text-align:right;top:670.27px;font-size:12.2px;color:#6f8399;font-weight:normal;font-style:normal;">197</div><div class="t" style="left:329.60px;width:400px;text-align:right;top:670.27px;font-size:12.2px;color:#6f8399;font-weight:normal;font-style:normal;">73</div><div class="t" style="left:389.40px;width:400px;text-align:right;top:670.27px;font-size:12.2px;color:#6f8399;font-weight:normal;font-style:normal;">694</div><div class="t" style="left:503.50px;width:400px;text-align:right;top:670.27px;font-size:12.2px;color:#6f8399;font-weight:normal;font-style:normal;">50 662</div><div class="t" style="left:558.10px;width:400px;text-align:right;top:670.27px;font-size:12.2px;color:#6f8399;font-weight:normal;font-style:normal;">28%</div><div class="t" style="left:649.60px;width:400px;text-align:right;top:670.27px;font-size:12.2px;color:#6f8399;font-weight:normal;font-style:normal;">197</div><div class="t" style="left:721.80px;width:400px;text-align:right;top:670.27px;font-size:12.2px;color:#6f8399;font-weight:normal;font-style:normal;">0</div><div class="t" style="left:789.90px;width:400px;text-align:right;top:670.27px;font-size:12.2px;color:#6f8399;font-weight:normal;font-style:normal;">0</div><div class="t" style="left:155.40px;top:704.17px;font-size:12.2px;color:#6f8399;font-weight:normal;font-style:normal;">Unknown</div><div class="t" style="left:-75.00px;width:400px;text-align:right;top:704.17px;font-size:12.2px;color:#6f8399;font-weight:normal;font-style:normal;">8</div><div class="t" style="left:-15.60px;width:400px;text-align:right;top:704.17px;font-size:12.2px;color:#6f8399;font-weight:normal;font-style:normal;">644</div><div class="t" style="left:99.00px;width:400px;text-align:right;top:704.17px;font-size:12.2px;color:#6f8399;font-weight:normal;font-style:normal;">5 153</div><div class="t" style="left:165.50px;width:400px;text-align:right;top:704.17px;font-size:12.2px;color:#6f8399;font-weight:normal;font-style:normal;">3%</div><div class="t" style="left:257.90px;width:400px;text-align:right;top:704.17px;font-size:12.2px;color:#6f8399;font-weight:normal;font-style:normal;">20</div><div class="t" style="left:329.60px;width:400px;text-align:right;top:704.17px;font-size:12.2px;color:#6f8399;font-weight:normal;font-style:normal;">49</div><div class="t" style="left:389.40px;width:400px;text-align:right;top:704.17px;font-size:12.2px;color:#6f8399;font-weight:normal;font-style:normal;">687</div><div class="t" style="left:503.50px;width:400px;text-align:right;top:704.17px;font-size:12.2px;color:#6f8399;font-weight:normal;font-style:normal;">33 663</div><div class="t" style="left:558.10px;width:400px;text-align:right;top:704.17px;font-size:12.2px;color:#6f8399;font-weight:normal;font-style:normal;">19%</div><div class="t" style="left:649.60px;width:400px;text-align:right;top:704.17px;font-size:12.2px;color:#6f8399;font-weight:normal;font-style:normal;">131</div><div class="t" style="left:721.80px;width:400px;text-align:right;top:704.17px;font-size:12.2px;color:#6f8399;font-weight:normal;font-style:normal;">41</div><div class="t" style="left:789.90px;width:400px;text-align:right;top:704.17px;font-size:12.2px;color:#6f8399;font-weight:normal;font-style:normal;">43</div><div class="t" style="left:155.40px;top:738.27px;font-size:12.2px;color:#6f8399;font-weight:normal;font-style:normal;">Visbook Web</div><div class="t" style="left:-75.00px;width:400px;text-align:right;top:738.27px;font-size:12.2px;color:#6f8399;font-weight:normal;font-style:normal;">15</div><div class="t" style="left:-15.60px;width:400px;text-align:right;top:738.27px;font-size:12.2px;color:#6f8399;font-weight:normal;font-style:normal;">612</div><div class="t" style="left:99.00px;width:400px;text-align:right;top:738.27px;font-size:12.2px;color:#6f8399;font-weight:normal;font-style:normal;">9 184</div><div class="t" style="left:165.50px;width:400px;text-align:right;top:738.27px;font-size:12.2px;color:#6f8399;font-weight:normal;font-style:normal;">6%</div><div class="t" style="left:257.90px;width:400px;text-align:right;top:738.27px;font-size:12.2px;color:#6f8399;font-weight:normal;font-style:normal;">36</div><div class="t" style="left:329.60px;width:400px;text-align:right;top:738.27px;font-size:12.2px;color:#6f8399;font-weight:normal;font-style:normal;">15</div><div class="t" style="left:389.40px;width:400px;text-align:right;top:738.27px;font-size:12.2px;color:#6f8399;font-weight:normal;font-style:normal;">612</div><div class="t" style="left:503.50px;width:400px;text-align:right;top:738.27px;font-size:12.2px;color:#6f8399;font-weight:normal;font-style:normal;">9 180</div><div class="t" style="left:558.10px;width:400px;text-align:right;top:738.27px;font-size:12.2px;color:#6f8399;font-weight:normal;font-style:normal;">6%</div><div class="t" style="left:649.60px;width:400px;text-align:right;top:738.27px;font-size:12.2px;color:#6f8399;font-weight:normal;font-style:normal;">36</div><div class="t" style="left:721.80px;width:400px;text-align:right;top:738.27px;font-size:12.2px;color:#6f8399;font-weight:normal;font-style:normal;">0</div><div class="t" style="left:789.90px;width:400px;text-align:right;top:738.27px;font-size:12.2px;color:#6f8399;font-weight:normal;font-style:normal;">0</div>
</body></html>
